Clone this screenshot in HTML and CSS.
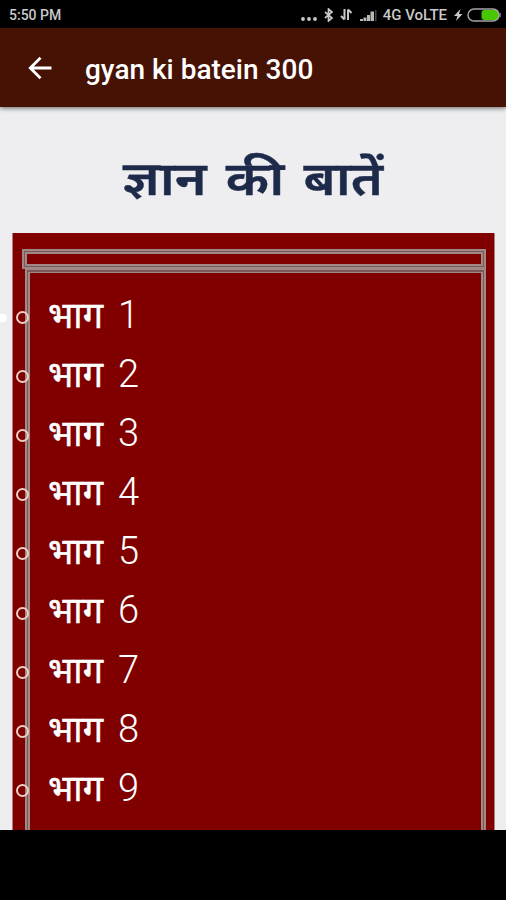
FILE: index.html
```html
<!DOCTYPE html>
<html lang="hi">
<head>
  <meta charset="UTF-8" />
  <title>gyan ki batein 300</title>
  <link rel="stylesheet" href="styles.css">
</head>
<body>
  <div class="status-bar">
    <span class="time">5:50 PM</span>
    <svg class="dots" width="16" height="4" viewBox="0 0 16 4"><circle cx="2" cy="2" r="1.900" fill="#c8c8c8"/><circle cx="8" cy="2" r="1.900" fill="#c8c8c8"/><circle cx="14" cy="2" r="1.900" fill="#c8c8c8"/></svg>
    <svg class="bluetooth" width="10" height="14" viewBox="0 0 10 14"><path d="M1 4l7 6-3.500 3V1L8 4 1 10" fill="none" stroke="#c8c8c8" stroke-width="1.700"/></svg>
    <svg class="arrows" width="13" height="13" viewBox="0 0 13 13"><path d="M4.500 1v10.500M8 12V1.500M1 8l3.500 3.500M8 1.500L11.500 5" fill="none" stroke="#c8c8c8" stroke-width="2"/></svg>
    <svg class="signal" width="17" height="12" viewBox="0 0 17 12"><path d="M0 12V10h3v2zM3.500 12V8.500h3V12zM7 12V6h3v6zM10.500 12V2.500h3.500V12z" fill="#b8b8b8"/><path d="M15 12V1h1.500v11z" fill="#444"/></svg>
    <span class="network">4G VoLTE</span>
    <svg class="bolt" width="9" height="12" viewBox="0 0 9 12"><path d="M6.500 0L0 7h3.500L2 12l6.500-7H5z" fill="#c8c8c8"/></svg>
    <svg class="battery" width="34" height="14" viewBox="0 0 34 14"><rect x="14.500" y="2" width="17" height="10" rx="3" fill="#48c800"/><rect x="1" y="1" width="31" height="12" rx="6" fill="none" stroke="#a5a5a5" stroke-width="1.500"/><path d="M33 5v4" stroke="#8a8a8a" stroke-width="1.500"/></svg>
  </div>

  <header class="app-bar">
    <svg class="back" width="24" height="24" viewBox="0 0 24 24"><path d="M23.500 12H2.500M12.500 1.800L2.300 12l10.200 10.200" fill="none" stroke="#fff" stroke-width="2.800"/></svg>
    <div class="app-title">gyan ki batein 300</div>
  </header>

  <main class="content">
    <h1>ज्ञान की बातें</h1>
    <div class="panel">
      <div class="strip"></div>
      <ul class="parts">
        <li><span class="word">भाग</span><span class="num">1</span></li>
        <li><span class="word">भाग</span><span class="num">2</span></li>
        <li><span class="word">भाग</span><span class="num">3</span></li>
        <li><span class="word">भाग</span><span class="num">4</span></li>
        <li><span class="word">भाग</span><span class="num">5</span></li>
        <li><span class="word">भाग</span><span class="num">6</span></li>
        <li><span class="word">भाग</span><span class="num">7</span></li>
        <li><span class="word">भाग</span><span class="num">8</span></li>
        <li><span class="word">भाग</span><span class="num">9</span></li>
      </ul>
    </div>
    <span class="scroll-dot"></span>
  </main>

  <div class="nav-bar"></div>
</body>
</html>
```
FILE: styles.css
```css
*,
*::before {
  box-sizing: border-box;
}
body {
  margin: 0;
  height: 900px;
  display: flex;
  flex-direction: column;
  overflow: hidden;
  background: #eeeef0;
  font-family: Roboto, "Noto Sans", "Noto Sans Devanagari", sans-serif;
}
.status-bar {
  height: 28px;
  flex: none;
  display: flex;
  align-items: center;
  padding: 1px 5px 0 9px;
  background: #000;
  color: #c8c8c8;
  font-size: 14px;
  font-weight: 500;
}
.time {
  margin-right: auto;
}
.dots {
  margin-top: 8px;
}
.bluetooth {
  margin-left: 7px;
}
.arrows {
  margin-left: 6px;
}
.signal {
  margin-left: 7px;
}
.network {
  margin-left: 6px;
  font-size: 15px;
  white-space: nowrap;
}
.bolt {
  margin-left: 7px;
}
.battery {
  margin-left: 4px;
}
.app-bar {
  height: 79px;
  flex: none;
  display: flex;
  align-items: center;
  padding: 1px 0 0 28px;
  background: #461204;
  color: #fff;
  box-shadow: 0 1px 5px rgba(0, 0, 0, 0.6);
  position: relative;
}
.app-title {
  margin: 3px 0 0 33px;
  font-size: 28px;
  font-weight: 500;
}
.content {
  flex: 1;
  min-height: 0;
  position: relative;
  overflow: hidden;
}
h1 {
  height: 126px;
  margin: 0;
  padding-top: 37px;
  text-align: center;
  color: #1e2a4a;
  font-size: 47px;
  line-height: 70px;
  font-weight: 600;
  word-spacing: 5px;
  transform: scaleX(1.145);
  -webkit-text-stroke: 0.4px #1e2a4a;
}
.panel {
  width: 483px;
  height: 700px;
  margin-left: 12px;
  padding: 16px 8px 0 9px;
  background: #800000;
  border: solid #b08080;
  border-width: 0 1px;
}
.strip,
.parts {
  border: 5px double #a08886;
  background: linear-gradient(#800000, #800000) padding-box, linear-gradient(#7c5856, #7c5856) border-box;
}
.strip {
  height: 20px;
}
.parts {
  height: 640px;
  margin: 0 0 0 3px;
  padding: 13px 0 0 19px;
  list-style: none;
  border-top-width: 4px;
}
.parts li {
  display: flex;
  align-items: baseline;
  height: 59.1px;
  line-height: 59px;
  color: #fff;
  font-size: 38px;
}
.parts li::before {
  content: "";
  flex: none;
  align-self: center;
  width: 13px;
  height: 13px;
  margin: 4px 19px 0 -33px;
  border: 2px solid #ecd0c8;
  border-radius: 50%;
}
.word {
  width: 70px;
  font-size: 36px;
  font-weight: 400;
  -webkit-text-stroke: 0.5px #fff;
}
.num {
  font-weight: 300;
}
.scroll-dot {
  position: absolute;
  left: -3px;
  top: 207px;
  width: 10px;
  height: 8px;
  border-radius: 4px;
  background: #fff;
}
.nav-bar {
  height: 70px;
  flex: none;
  background: #000;
}
```
